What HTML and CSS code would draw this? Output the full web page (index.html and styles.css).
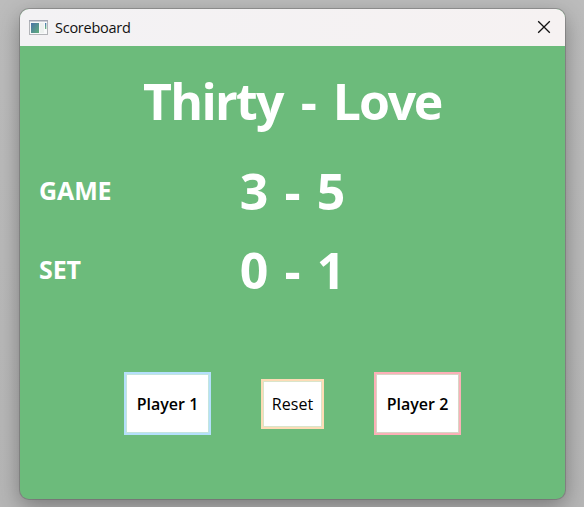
FILE: index.html
```html
<!DOCTYPE html>
<html lang="en">
<head>
<meta charset="utf-8">
<title>Scoreboard</title>
<link rel="stylesheet" href="styles.css">
</head>
<body>
<main class="window">
  <header class="titlebar">
    <svg class="app-icon" width="19" height="15" viewBox="0 0 19 15">
      <defs><linearGradient id="g" x1="0" y1="0" x2="1" y2="1"><stop offset="0" stop-color="#4a72a8"/><stop offset="1" stop-color="#5fae7c"/></linearGradient>
      <linearGradient id="h" x1="0" y1="0" x2="0" y2="1"><stop offset="0" stop-color="#4a78b4"/><stop offset="1" stop-color="#6dbb7b"/></linearGradient></defs>
      <rect x=".5" y=".5" width="18" height="14" fill="#f8f9fa" stroke="#b2b4b8"/>
      <path d="M0 .75h19" stroke="#a2a5b2" stroke-width="1.5"/>
      <rect x="2" y="3" width="8" height="10" fill="url(#g)"/>
      <rect x="11" y="3" width="4" height="10" fill="#edf1ef"/>
      <rect x="16" y="3" width="1.3" height="6" fill="url(#h)"/>
    </svg>
    <h1 class="caption">Scoreboard</h1>
    <svg class="close" width="14" height="14" viewBox="0 0 14 14"><path d="M1.2 1.2l11.6 11.6M12.8 1.2L1.2 12.8" fill="none" stroke="#111" stroke-width="1.3"/></svg>
  </header>
  <section class="board">
    <div class="points"><span class="first">Thirty</span> <span class="dash">-</span> <span class="second">Love</span></div>
    <div class="row"><span class="label game">GAME</span><div class="score"><span>3</span><span class="dash">-</span><span>5</span></div></div>
    <div class="row"><span class="label set">SET</span><div class="score"><span>0</span><span class="dash">-</span><span>1</span></div></div>
    <div class="actions">
      <button class="player one">Player 1</button>
      <button class="reset">Reset</button>
      <button class="player two">Player 2</button>
    </div>
  </section>
</main>
</body>
</html>
```
FILE: styles.css
```css
* { box-sizing: border-box; }
body {
  margin: 0;
  height: 507px;
  padding: 9px 19px 8px 20px;
  overflow: hidden;
  background: linear-gradient(#bcbcbc, #b6b6b6);
  font-family: "Open Sans", "Noto Sans", sans-serif;
}
.window {
  height: 490px;
  border-radius: 9px;
  overflow: hidden;
  background: #6cbb7b;
  box-shadow: 0 0 0 1px rgba(90, 90, 90, .4), 0 7px 22px rgba(0, 0, 0, .34);
}
.titlebar {
  display: flex;
  align-items: center;
  height: 37px;
  padding: 0 14px 0 9px;
  background: linear-gradient(90deg, #f3f2f4, #f6f2f2);
}
.app-icon { margin-bottom: 1px; }
.close { margin-bottom: 1px; }
.caption {
  margin: 0 auto 0 7px;
  font-family: "Open Sans", sans-serif;
  font-size: 14.5px;
  font-weight: 400;
  letter-spacing: -.25px;
  line-height: 20px;
  color: #111;
}
.board { padding-top: 16px; color: #fff; font-weight: 700; }
.points {
  display: flex;
  height: 78px;
  padding-left: 123px;
  font-size: 50px;
  line-height: 78px;
}
.first { letter-spacing: -1.7px; }
.second { letter-spacing: -2.2px; }
.points .dash { margin: 0 16px 0 18px; }
.row {
  display: grid;
  grid-template-columns: 180px 185px 1fr;
  align-items: center;
  height: 79px;
  padding-left: 19px;
}
.points + .row { margin-top: 12px; }
.label { margin-bottom: 3px; font-size: 25px; letter-spacing: -.1px; line-height: 34px; }
.set { letter-spacing: -.1px; }
.score {
  display: grid;
  grid-template-columns: 30px 1fr 30px;
  width: 107px;
  margin-left: 20px;
  text-align: center;
  font-size: 50px;
  line-height: 79px;
}
.actions {
  display: flex;
  justify-content: center;
  align-items: center;
  gap: 50px;
  height: 63px;
  margin-top: 62px;
}
button {
  padding: 0;
  border: 2px solid;
  background: #fff;
  color: #000;
  font-family: "Open Sans", sans-serif;
  font-size: 16px;
  white-space: nowrap;
}
.player { width: 87px; height: 63px; font-weight: 600; letter-spacing: 0; }
.one { border-color: #b5e0fb; box-shadow: inset 0 0 0 1px #c3e5df; }
.reset { width: 63px; height: 50px; border-color: #fddcb6; box-shadow: inset 0 0 0 1px #d9e5cb; letter-spacing: .1px; }
.two { border-color: #fbb0b7; box-shadow: inset 0 0 0 1px #d8d6c6; }
```
